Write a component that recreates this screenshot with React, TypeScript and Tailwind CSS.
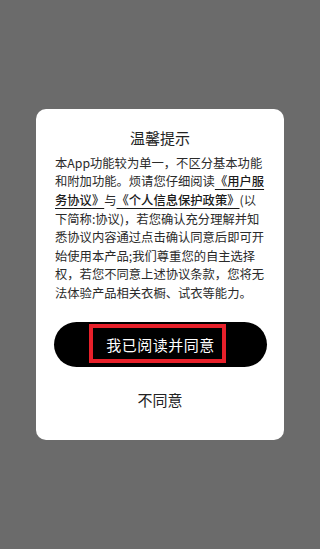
import React from "react";

export default function App() {
  const u = "underline underline-offset-[3px] decoration-1 font-medium text-[#1a1a1a]";
  return (
    <div
      className="w-[320px] h-[549px] bg-[#6b6b6b] flex items-center justify-center"
      style={{ fontFamily: '"Noto Sans CJK SC", "Noto Sans", sans-serif' }}
    >
      <div className="w-[248px] bg-white rounded-[10px] flex flex-col items-center pt-[18px] pb-[29px]">
        <div className="text-[15px] leading-[22px] text-[#222]">温馨提示</div>
        <div className="mt-[5px] w-full px-[19px] text-[12.3px] leading-[18.6px] text-[#2a2a2a] whitespace-nowrap">
          <div>本App功能较为单一，不区分基本功能</div>
          <div>
            和附加功能。烦请您仔细阅读<span className={u}>《用户服</span>
          </div>
          <div>
            <span className={u}>务协议》</span>与<span className={u}>《个人信息保护政策》</span>(以
          </div>
          <div>下简称:协议)，若您确认充分理解并知</div>
          <div>悉协议内容通过点击确认同意后即可开</div>
          <div>始使用本产品;我们尊重您的自主选择</div>
          <div>权，若您不同意上述协议条款，您将无</div>
          <div>法体验产品相关衣橱、试衣等能力。</div>
        </div>
        <div className="mt-[19.5px] self-start ml-[18px] relative w-[213px] h-[45px] rounded-full bg-black flex items-center justify-center">
          <span className="text-[15px] leading-[22px] text-white tracking-[0.5px]">我已阅读并同意</span>
          <div className="absolute left-[35px] top-[2px] w-[137px] h-[39px] border-[4px] border-[#e8202a]" />
        </div>
        <div className="mt-[22px] text-[15px] leading-[22px] text-[#222]">不同意</div>
      </div>
    </div>
  );
}
